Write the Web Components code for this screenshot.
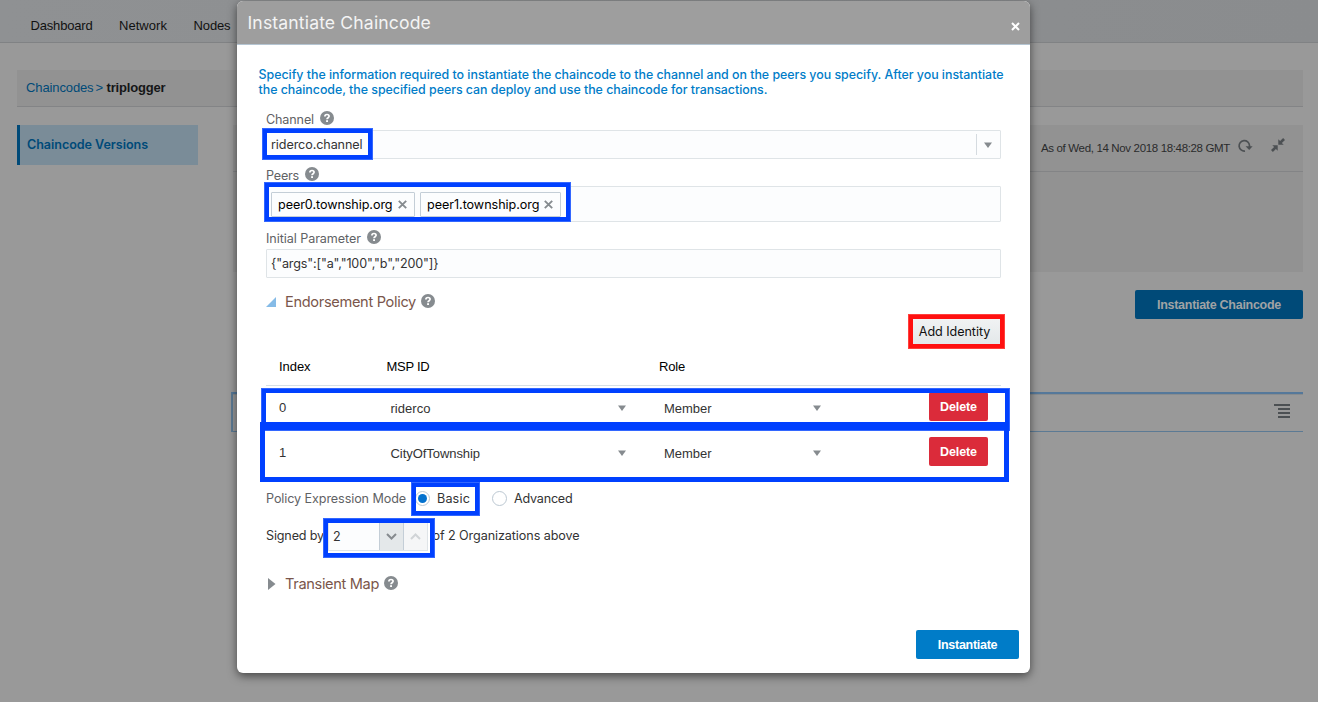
<!DOCTYPE html>
<html lang="en">
<head>
<meta charset="utf-8">
<title>Instantiate Chaincode</title>
<style>
html,body{margin:0;height:100%;overflow:hidden;background:#999}
body{font:13px/16px "Liberation Sans",Arial,sans-serif;color:#1f2022}
</style>
</head>
<body>
<chaincode-app></chaincode-app>
<script>
const INTER = 'Inter,"Open Sans",sans-serif';
function define(name, html, setup) {
  const t = document.createElement('template');
  t.innerHTML = html;
  customElements.define(name, class extends HTMLElement {
    constructor() {
      super();
      this.attachShadow({ mode: 'open' }).appendChild(t.content.cloneNode(true));
    }
    connectedCallback() { if (setup) setup.call(this, this.shadowRoot); }
  });
}

/* Single-line label tracked to a given width */
define('fit-text', `<style>:host{display:inline-block;white-space:pre;flex:none}span{display:inline-block}</style><span><slot></slot></span>`, function (r) {
  const w = +this.getAttribute('w'), s = r.querySelector('span');
  const n = this.textContent.length;
  s.style.letterSpacing = '0px';
  const nat = s.getBoundingClientRect().width;
  s.style.letterSpacing = ((w - nat) / n) + 'px';
  this.style.width = w + 'px';
});

define('help-icon', `<style>:host{display:block;width:14px;height:14px;flex:none}svg{display:block}</style>
<svg width="14" height="14" viewBox="0 0 14 14"><circle cx="7" cy="7" r="7" fill="#868b8f"/><path d="M4.9 5.5C4.9 4.2 5.8 3.5 7 3.5c1.2 0 2.1.7 2.1 1.8C9.1 6.7 7 6.7 7 8.3" fill="none" stroke="#fff" stroke-width="1.7"/><rect x="6.1" y="9.2" width="1.9" height="1.8" fill="#fff"/></svg>`);

define('caret-down', `<style>:host{display:block;width:8px;height:6px;flex:none}svg{display:block}</style>
<svg width="8" height="6"><path d="M0 .5h8L4 6z" fill="#868b8f"/></svg>`);

define('field-label', `<style>:host{display:flex;align-items:center;height:18px;color:#5f6265;font:12.6px/18px ${INTER}}help-icon{margin:-2px 0 0 6px}::slotted(fit-text){padding-top:2px}</style>
<slot></slot><help-icon></help-icon>`);

define('section-title', `<style>:host{display:flex;align-items:center;height:20px;color:#7a564b;font:14.6px/20px ${INTER}}.m{width:19px;flex:none}svg{display:block}help-icon{margin:-3px 0 0 5px}:host(:not([open])) .o,:host([open]) .c{display:none}</style>
<div class="m"><svg class="o" width="10" height="10"><path d="M10 0v10H0z" fill="#85bbe7"/></svg><svg class="c" style="margin-left:2px" width="8" height="12"><path d="M0 0l7.500 6L0 12z" fill="#868b8f"/></svg></div><slot></slot><help-icon></help-icon>`);

define('text-box', `<style>:host{display:flex;align-items:center;box-sizing:border-box;width:735px;height:29px;border:1px solid #dfe4e7;border-radius:1px;background:#fcfdfe;padding:0 0 0 4px;color:#333;font:12.6px/18px ${INTER}}::slotted(fit-text){padding-top:1px}</style><slot></slot>`);

define('peer-chip', `<style>:host{display:flex;align-items:center;justify-content:space-between;box-sizing:border-box;height:25px;margin-top:1px;border:1px solid #c4ced7;border-radius:1px;background:#fcfdfe;padding:0 6px 0 6px;color:#000;font:12.6px/18px ${INTER}}svg{display:block;flex:none}</style><slot></slot><svg width="10" height="9"><path d="M.8 .8l7.400 7.400M8.200 .8L.8 8.200" stroke="#868b8f" stroke-width="1.9"/></svg>`);

define('push-button', `<style>:host{display:flex;align-items:center;justify-content:center;box-sizing:border-box;height:29px;border-radius:2px;background:var(--bg,#007cc8);color:var(--fg,#fff);font:bold 12.5px/16px "Liberation Sans",Arial,sans-serif;flex:none}:host([plain]){font:12.6px/18px ${INTER}}</style><slot></slot>`);

define('radio-dot', `<style>:host{display:block;box-sizing:border-box;width:15px;height:15px;border:1px solid #bcc8d2;border-radius:50%;background:#fff;padding:2px;flex:none}i{display:block;width:9px;height:9px;border-radius:50%}:host([checked]) i{background:#0572ce}</style><i></i>`);

define('policy-row', `<style>:host{display:grid;grid-template-columns:124.5px 227.5px 46px 149px 116px 59px;height:45px;align-items:center;color:#333}caret-down{margin-top:-1px}.i{padding:0 0 1px 13px}</style>
<div class="i"><slot name="index"></slot></div><slot name="msp"></slot><caret-down></caret-down><slot name="role"></slot><caret-down></caret-down><push-button style="--bg:#db2b3a;margin-top:-4px"><fit-text w="37">Delete</fit-text></push-button>`);

/* Coloured frame drawn over the form */
define('mark-box', `<style>:host{position:absolute;box-sizing:border-box;border:5px solid var(--c,#0040ff);outline:1px solid var(--o,#7fa3ff66);outline-offset:-1px}</style>`, function () {
  const [x, y, w, h] = this.getAttribute('box').split(' ');
  Object.assign(this.style, { left: x + 'px', top: y + 'px', width: w + 'px', height: h + 'px' });
});

define('nav-bar', `<style>:host{display:flex;align-items:center;box-sizing:border-box;height:43px;padding:9px 0 0 30.5px;gap:26.5px;background:linear-gradient(90deg,#8f9193,#8a8c8e);border-bottom:1px solid #808284;color:#111}</style>
<fit-text w="62">Dashboard</fit-text><fit-text w="48">Network</fit-text><fit-text w="37">Nodes</fit-text>`);

define('app-page', `<style>
:host{display:flex;flex-direction:column;height:702px;background:#999}
.crumb{display:flex;align-items:center;box-sizing:border-box;margin:27px 15px 0 17px;height:37px;padding:0 0 1px 9px;background:#929292;border-bottom:1px solid #838486;color:#004a78}
.crumb b{color:#151617}
.cols{display:flex;margin:18px 15px 0 17px;gap:33px}
.side{display:flex;align-items:center;box-sizing:border-box;width:181px;height:40px;border-left:3px solid #004a78;background:#7a8c98;padding:0 0 0 7px;color:#004a78;font:600 12.6px/16px ${INTER}}
.main{flex:1;display:flex;flex-direction:column}
.panel{height:147px;margin-left:2px;background:#929292}
.bar{display:flex;align-items:center;justify-content:flex-end;box-sizing:border-box;height:47px;border-bottom:1px solid #838486;padding-right:18px;color:#2a2b2c;font-size:11.5px}
.bar svg{display:block}
.act{display:flex;justify-content:flex-end;margin-top:18px}
.list{display:flex;align-items:center;justify-content:flex-end;box-sizing:border-box;height:40px;margin-top:73px;border:1px solid #5c7a94;border-top:2px solid #55789a;border-left-width:2px;border-right:0;padding:0 13px 3px 0;box-shadow:inset 0 1px #888c8f}
</style>
<nav-bar></nav-bar>
<div class="crumb"><fit-text w="67.5">Chaincodes</fit-text><fit-text w="8" style="margin:0 3px 0 2px">&gt;</fit-text><b><fit-text w="59">triplogger</fit-text></b></div>
<div class="cols">
 <div class="side"><fit-text w="121">Chaincode Versions</fit-text></div>
 <div class="main">
  <div class="panel"><div class="bar"><fit-text w="189">As of Wed, 14 Nov 2018 18:48:28 GMT</fit-text>
   <svg style="margin:-5px 18px 0 8px" width="15" height="14" viewBox="0 0 15 14"><path d="M7 12A5.200 5.200 0 1 1 11.500 6.500V8" fill="none" stroke="#4c5053" stroke-width="1.7"/><path d="M7.600 7.300h7L11.200 11z" fill="#4c5053"/></svg>
   <svg style="margin-top:-6px" width="14" height="14" viewBox="0 0 14 14"><path d="M7.300 1.300v5.400h5.400L10.900 4.900 14 1.900 12.100 0 9.100 3.100zM6.700 12.700V7.300H1.300L3.100 9.100 0 12.100 1.900 14 4.900 10.900z" fill="#4c5053"/></svg>
  </div></div>
  <div class="act"><push-button style="width:168px;--bg:#004a78;--fg:#a0a3a5"><fit-text w="124">Instantiate Chaincode</fit-text></push-button></div>
  <div class="list"><svg width="16" height="14"><path d="M0 1h16M4 5h12M4 9h12M4 13h12" stroke="#4c5053" stroke-width="1.8"/></svg></div>
 </div>
</div>`);

define('instantiate-dialog', `<style>
:host{position:absolute;left:237px;top:1px;display:flex;flex-direction:column;box-sizing:border-box;width:793px;height:672px;border-radius:6px;background:#fff;box-shadow:0 3px 10px rgba(0,0,0,.55)}
header{display:flex;align-items:center;justify-content:space-between;box-sizing:border-box;height:44px;padding:0 10px 0 10.5px;border-radius:6px 6px 0 0;background:#9e9e9e;border-bottom:1px solid #b5c5d2;color:#f4f4f4;font:17.6px/22px ${INTER}}
header svg{margin-top:8px}
.intro{display:flex;flex-direction:column;margin:22px 0 0 21.5px;height:30px;color:#007cc8;font:500 12.4px/15px ${INTER}}
.body{display:flex;flex-direction:column;margin:13px 0 0 29px;width:735px}
.combo{justify-content:space-between;padding-right:8px}
.drop{display:flex;align-items:center;height:21px;border-left:1px solid #d5dbe0;padding-left:7px}
.peers{height:36px;gap:5px;padding-left:4px}
.th{display:grid;grid-template-columns:120.5px 272.5px 1fr;align-items:center;box-sizing:border-box;height:40px;padding-top:3px;border-bottom:1px solid #d6dfe6;color:#000}
.th :first-child{margin-left:13px}
.line{display:flex;align-items:center;color:#333;font:12.6px/18px ${INTER}}
.mode fit-text{padding-top:2px}
.spin{display:flex;box-sizing:border-box;width:100px;height:29px;border:1px solid #dfe4e7;background:#fcfdfe;margin-left:4px}
.spin div{display:flex;align-items:center;justify-content:center;width:24px;box-sizing:border-box;background:#e4e8ea;border-left:1px solid #c4ced7}
.spin div+div{background:#f5f6f7}
.spin span{padding:5px 0 0 4px;flex:1}
</style>
<header><fit-text w="183.5">Instantiate Chaincode</fit-text><svg width="9" height="9"><path d="M1 1l7 7M8 1L1 8" stroke="#fff" stroke-width="2"/></svg></header>
<div class="intro"><fit-text w="745">Specify the information required to instantiate the chaincode to the channel and on the peers you specify. After you instantiate</fit-text><fit-text w="509">the chaincode, the specified peers can deploy and use the chaincode for transactions.</fit-text></div>
<div class="body">
 <field-label><fit-text w="48">Channel</fit-text></field-label>
 <text-box class="combo" style="margin-top:2px"><fit-text w="91.5">riderco.channel</fit-text><div class="drop"><caret-down></caret-down></div></text-box>
 <field-label style="margin-top:7px"><fit-text w="33">Peers</fit-text></field-label>
 <text-box class="peers" style="margin-top:2px"><peer-chip style="width:144px"><fit-text w="114.5">peer0.township.org</fit-text></peer-chip><peer-chip style="width:141px"><fit-text w="112.5">peer1.township.org</fit-text></peer-chip></text-box>
 <field-label style="margin-top:7px"><fit-text w="95">Initial Parameter</fit-text></field-label>
 <text-box style="margin-top:2px"><fit-text w="167.5">{"args":["a","100","b","200"]}</fit-text></text-box>
 <section-title open style="margin-top:14px"><fit-text w="131">Endorsement Policy</fit-text></section-title>
 <push-button plain style="align-self:flex-end;width:93px;margin-top:5px;--bg:linear-gradient(#f1f3f4,#e3e7e9);--fg:#111"><fit-text w="71.5">Add Identity</fit-text></push-button>
 <div class="th"><fit-text w="31.5">Index</fit-text><fit-text w="43">MSP ID</fit-text><fit-text w="26">Role</fit-text></div>
 <policy-row><span slot="index">0</span><fit-text slot="msp" w="40">riderco</fit-text><fit-text slot="role" w="47.5">Member</fit-text></policy-row>
 <policy-row><span slot="index">1</span><fit-text slot="msp" w="89.5">CityOfTownship</fit-text><fit-text slot="role" w="47.5">Member</fit-text></policy-row>
 <div class="line mode" style="margin-top:12px;height:20px"><fit-text w="140" style="color:#5f6265">Policy Expression Mode</fit-text><radio-dot checked style="margin:0 6px 0 9px"></radio-dot><fit-text w="33" style="margin-left:1px">Basic</fit-text><radio-dot style="margin:0 7px 0 22px"></radio-dot><fit-text w="58.500">Advanced</fit-text></div>
 <div class="line" style="margin-top:14px;height:29px"><fit-text w="58" style="margin-top:-2px">Signed by</fit-text>
  <div class="spin"><span>2</span><div><svg width="11" height="7"><path d="M1 1l4.500 4.500L10 1" fill="none" stroke="#868b8f" stroke-width="2"/></svg></div><div><svg width="11" height="7"><path d="M1 6l4.500-4.500L10 6" fill="none" stroke="#d0d4d7" stroke-width="2"/></svg></div></div>
  <fit-text w="147" style="margin:-2px 0 0 4.500px">of 2 Organizations above</fit-text></div>
 <section-title style="margin-top:23px"><fit-text w="94">Transient Map</fit-text></section-title>
 <push-button style="align-self:flex-end;width:103px;margin:36px -18px 0 0"><fit-text w="59.500">Instantiate</fit-text></push-button>
</div>`);

define('chaincode-app', `<style>:host{display:block;position:relative;width:1318px;height:702px;overflow:hidden}</style>
<app-page></app-page><instantiate-dialog></instantiate-dialog>
<mark-box box="262 128 111 32"></mark-box><mark-box box="264 182 307 40"></mark-box>
<mark-box box="261 388 749 43"></mark-box><mark-box box="260 422 749 60" style="border-top-width:8px;outline-color:transparent"></mark-box>
<mark-box box="411 482 69 34"></mark-box><mark-box box="323 518 112 40"></mark-box>
<mark-box box="908 314 97 35" style="--c:#ff1010;--o:#ff8a8066"></mark-box>`);
</script>
</body>
</html>
